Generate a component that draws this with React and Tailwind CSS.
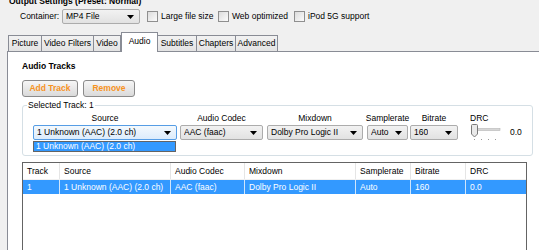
import React from "react";

function Arrow() {
  return (
    <svg width="7" height="4" viewBox="0 0 7 4" className="shrink-0">
      <path d="M0 0 H7 L3.5 4 Z" fill="#000" />
    </svg>
  );
}

function Combo({ w, text, focused }) {
  return (
    <div
      className={`${w} h-[15px] flex items-center justify-between pl-[3px] pr-[5px] rounded-[2px] border ${
        focused
          ? "border-[#569de5] bg-gradient-to-b from-[#f4f9fd] to-[#dcecfc]"
          : "border-[#acacac] bg-gradient-to-b from-[#f2f2f2] to-[#e2e2e2]"
      }`}
    >
      <span className="truncate leading-[13px]">{text}</span>
      <Arrow />
    </div>
  );
}

function Check() {
  return (
    <div className="w-[11px] h-[11px] border border-[#8f8f8f] bg-gradient-to-br from-[#dcdcdc] to-[#fbfbfb] shrink-0" />
  );
}

function Field({ w, label, children, className = "" }) {
  return (
    <div className={`${w} flex flex-col items-center relative ${className}`}>
      <div className="h-[10px] leading-[10px] mb-[2px]">{label}</div>
      {children}
    </div>
  );
}

const cols = [
  ["Track", "w-[37px]", "1"],
  ["Source", "w-[111px]", "1 Unknown (AAC) (2.0 ch)"],
  ["Audio Codec", "w-[74px]", "AAC (faac)"],
  ["Mixdown", "w-[111px]", "Dolby Pro Logic II"],
  ["Samplerate", "w-[55px]", "Auto"],
  ["Bitrate", "w-[55px]", "160"],
  ["DRC", "w-[60px]", "0.0"],
];

export default function App() {
  return (
    <div className="w-[539px] h-[250px] overflow-hidden bg-[#f0f0f0] font-['Liberation_Sans',Arial,sans-serif] text-[8.5px] text-black flex flex-col">
      <div className="h-[7px] pl-[9px] shrink-0">
        <div className="-mt-[4px] leading-[10px] font-bold">Output Settings (Preset: Normal)</div>
      </div>

      <div className="mt-[2px] h-[15px] flex items-center pl-[20px] shrink-0">
        <span className="w-[42px]">Container:</span>
        <Combo w="w-[78px]" text="MP4 File" />
        <div className="ml-[7px] w-[71px] flex items-center gap-[3px]">
          <Check />
          <span>Large file size</span>
        </div>
        <div className="w-[76px] flex items-center gap-[3px]">
          <Check />
          <span>Web optimized</span>
        </div>
        <div className="flex items-center gap-[3px]">
          <Check />
          <span>iPod 5G support</span>
        </div>
      </div>

      <div className="mt-[8px] h-[19px] flex items-end pl-[8px] shrink-0">
        <div className="w-[34px] h-[16px] border border-b-0 border-[#898c95] bg-gradient-to-b from-[#f2f2f2] to-[#e3e3e3] flex items-center justify-center">Picture</div>
        <div className="-ml-px w-[53px] h-[16px] border border-b-0 border-[#898c95] bg-gradient-to-b from-[#f2f2f2] to-[#e3e3e3] flex items-center justify-center">Video Filters</div>
        <div className="-ml-px w-[28px] h-[16px] border border-b-0 border-[#898c95] bg-gradient-to-b from-[#f2f2f2] to-[#e3e3e3] flex items-center justify-center">Video</div>
        <div className="relative z-10 -mb-px w-[37px] h-[20px] border border-b-0 border-[#898c95] bg-white flex items-start justify-center pt-[2px]">Audio</div>
        <div className="-ml-px w-[40px] h-[16px] border border-b-0 border-[#898c95] bg-gradient-to-b from-[#f2f2f2] to-[#e3e3e3] flex items-center justify-center">Subtitles</div>
        <div className="-ml-px w-[40px] h-[16px] border border-b-0 border-[#898c95] bg-gradient-to-b from-[#f2f2f2] to-[#e3e3e3] flex items-center justify-center">Chapters</div>
        <div className="-ml-px w-[43px] h-[16px] border border-b-0 border-[#898c95] bg-gradient-to-b from-[#f2f2f2] to-[#e3e3e3] flex items-center justify-center">Advanced</div>
      </div>

      <div className="flex-1 ml-[7px] border-l border-t border-[#898c95] bg-white pl-[14px] flex flex-col">
        <div className="pt-[9px] font-bold leading-[10px]">Audio Tracks</div>
        <div className="mt-[9px] flex gap-[5px]">
          <button className="w-[56px] h-[17px] rounded-[3px] border border-[#8a8a8a] bg-gradient-to-b from-[#f6f6f6] to-[#dadada] text-[#f7931e] font-bold">Add Track</button>
          <button className="w-[52px] h-[17px] rounded-[3px] border border-[#8a8a8a] bg-gradient-to-b from-[#f6f6f6] to-[#dadada] text-[#f7931e] font-bold">Remove</button>
        </div>

        <fieldset className="mt-[3px] w-[506px] border border-[#d5dfe5] rounded-[3px] px-0 pb-[14px]">
          <legend className="ml-[4px] px-[1px] leading-[10px]">Selected Track: 1</legend>
          <div className="pt-[3px] px-[10px] flex items-start">
            <Field w="w-[144px]" label="Source">
              <Combo w="w-[144px]" text="1 Unknown (AAC) (2.0 ch)" focused />
              <div className="absolute left-0 top-[28px] w-[143px] h-[11px] border border-[#646464] bg-[#3399ff] text-white leading-[9px] pl-[2px] z-10">
                1 Unknown (AAC) (2.0 ch)
              </div>
            </Field>
            <Field w="w-[83px]" label="Audio Codec" className="ml-[3px]">
              <Combo w="w-[83px]" text="AAC (faac)" />
            </Field>
            <Field w="w-[96px]" label="Mixdown" className="ml-[4px]">
              <Combo w="w-[96px]" text="Dolby Pro Logic II" />
            </Field>
            <Field w="w-[41px]" label="Samplerate" className="ml-[4px]">
              <Combo w="w-[41px]" text="Auto" />
            </Field>
            <Field w="w-[48px]" label="Bitrate" className="ml-[2px]">
              <Combo w="w-[48px]" text="160" />
            </Field>
            <div className="ml-[12px] w-[32px] flex flex-col">
              <div className="h-[10px] leading-[10px] mb-[1px]">DRC</div>
              <svg width="32" height="17" viewBox="0 0 32 17">
                <rect x="6" y="4.5" width="24" height="2" fill="#d6d6d6" stroke="#b4b4b4" strokeWidth="0.6" />
                <path d="M1.5 1.5 Q1.5 0.5 2.5 0.5 H6.5 Q7.5 0.5 7.5 1.5 V10 L4.5 13 L1.5 10 Z" fill="#eaeaea" stroke="#7a7a7a" strokeWidth="1" />
                <rect x="4" y="15" width="1" height="1" fill="#9a9a9a" />
                <rect x="11" y="15" width="1" height="1" fill="#9a9a9a" />
                <rect x="18" y="15" width="1" height="1" fill="#9a9a9a" />
                <rect x="25" y="15" width="1" height="1" fill="#9a9a9a" />
              </svg>
            </div>
            <div className="ml-[8px] mt-[12px] h-[15px] flex items-center">0.0</div>
          </div>
        </fieldset>

        <div className="mt-[6px] w-[505px] h-[200px] border border-[#646464] shrink-0">
          <div className="flex h-[17px] border-b border-[#f0f0f0]">
            {cols.map(([h, w], i) => (
              <div
                key={h}
                className={`${w} pl-[4px] flex items-center ${i < cols.length - 1 ? "border-r border-[#e5e5e5]" : ""}`}
              >
                {h}
              </div>
            ))}
          </div>
          <div className="flex h-[15px] bg-[#3399ff] text-white border-b border-white">
            {cols.map(([h, w, v], i) => (
              <div
                key={h}
                className={`${w} pl-[4px] flex items-center ${i < cols.length - 1 ? "border-r border-[#cfe5fb]" : ""}`}
              >
                {v}
              </div>
            ))}
          </div>
        </div>
      </div>
    </div>
  );
}
